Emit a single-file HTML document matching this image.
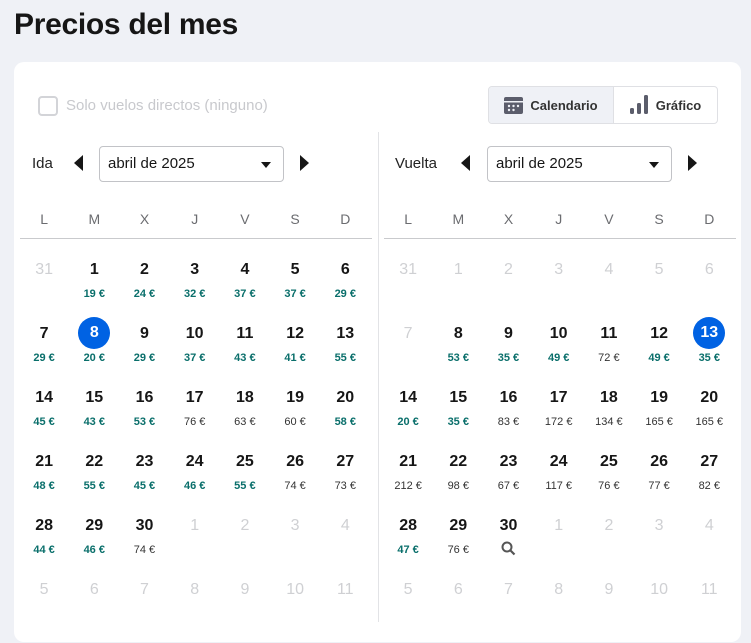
<!DOCTYPE html>
<html><head><meta charset="utf-8"><style>
*{box-sizing:border-box;margin:0;padding:0}
body{width:751px;height:622px;overflow:hidden;background:#eff1f6;font-family:"Liberation Sans",sans-serif;position:relative;color:#161616}
h1{position:absolute;left:14px;top:8px;font-size:30px;font-weight:700;letter-spacing:-0.3px;color:#161616}
.card{position:absolute;left:14px;top:62px;width:727px;height:580px;background:#fff;border-radius:10px}
.chk{position:absolute;left:38px;top:96px;width:20px;height:20px;border:2px solid #d3d4d8;border-radius:4px}
.chkl{position:absolute;left:66px;top:97px;font-size:15px;color:#c8c9cd}
.seg{position:absolute;left:488px;top:86px;width:230px;height:38px;border:1px solid #dfe0e4;border-radius:4px;display:flex;overflow:hidden}
.seg div{display:flex;align-items:center;justify-content:center;font-size:13px;font-weight:700;color:#333}
.s1{width:125px;background:#eff1f6;border-right:1px solid #dfe0e4;gap:7px}
.s2{flex:1;gap:8px}
.div{position:absolute;left:378px;top:132px;width:1px;height:490px;background:#e2e3e6}
.lbl{position:absolute;font-size:15px;color:#222}
.sel{position:absolute;top:146px;width:185px;height:36px;border:1px solid #c2c3c7;border-radius:4px;font-size:15px;padding:8px 0 0 8px;color:#161616}
.sel:after{content:"";position:absolute;right:12px;top:15px;border-left:5px solid transparent;border-right:5px solid transparent;border-top:6px solid #161616}
.arr{position:absolute;top:155px;width:0;height:0;border-top:8px solid transparent;border-bottom:8px solid transparent}
.al{border-right:9px solid #161616}.ar{border-left:9px solid #161616}
.wd{position:absolute;top:211px;width:50.2px;text-align:center;font-size:14px;color:#6b6c70}
.hl{position:absolute;top:238px;height:1px;background:#c9cacd}
.c{position:absolute;width:50.2px;height:64px;text-align:center}
.n{position:absolute;left:0;right:0;top:1px;font-size:16px;font-weight:700;line-height:20px;color:#161616}
.g .n{color:#cfd0d3;font-weight:400}
.p{position:absolute;left:0;right:0;top:29px;font-size:11px;line-height:12px;font-weight:700;color:#0a6f6b}
.p.x{font-weight:400;color:#333}
.s .n{left:9px;right:9px;top:-6px;height:32px;line-height:32px;border-radius:50%;background:#0062e3;color:#fff}
</style></head><body>
<h1>Precios del mes</h1>
<div class="card"></div>
<div class="chk"></div><div class="chkl">Solo vuelos directos (ninguno)</div>
<div class="seg"><div class="s1"><svg width="19" height="17" viewBox="0 0 19 17"><rect x="0" y="0" width="19" height="17" rx="2" fill="#5b5d6b"/><rect x="0" y="4" width="19" height="1.5" fill="#eff1f6"/><circle cx="5" cy="9" r="1.2" fill="#eff1f6"/><circle cx="9.5" cy="9" r="1.2" fill="#eff1f6"/><circle cx="14" cy="9" r="1.2" fill="#eff1f6"/><circle cx="5" cy="13" r="1.2" fill="#eff1f6"/><circle cx="9.5" cy="13" r="1.2" fill="#eff1f6"/></svg>Calendario</div><div class="s2"><svg width="18" height="20" viewBox="0 0 18 20"><rect x="0" y="13" width="4" height="6" rx="1.5" fill="#5b5d6b"/><rect x="7" y="8" width="4" height="11" rx="1.5" fill="#5b5d6b"/><rect x="14" y="0" width="4" height="19" rx="1.5" fill="#5b5d6b"/></svg>Gráfico</div></div>
<div class="div"></div>
<div class="lbl" style="left:32px;top:155px">Ida</div>
<div class="arr al" style="left:74px"></div>
<div class="sel" style="left:99px">abril de 2025</div>
<div class="arr ar" style="left:300px"></div>
<div class="lbl" style="left:395px;top:155px">Vuelta</div>
<div class="arr al" style="left:461px"></div>
<div class="sel" style="left:487px">abril de 2025</div>
<div class="arr ar" style="left:688px"></div>
<div class="hl" style="left:20px;width:352px"></div>
<div class="hl" style="left:384px;width:352px"></div>
<div id="cal"></div>
<script>
var wd=["L","M","X","J","V","S","D"];
function cal(x0,data){var h="";for(var i=0;i<7;i++)h+='<div class="wd" style="left:'+(x0+i*50.2)+'px">'+wd[i]+'</div>';
data.forEach(function(r,ri){r.forEach(function(c,ci){var cls="c",p="";var t=c.split(":");var n=t[0],v=t[1]||"";
if(v==="g")cls+=" g";else if(v)p= v==="q"?'<div class="p" style="top:26px"><svg width="15" height="15" viewBox="0 0 15 15"><circle cx="6" cy="6" r="4.5" fill="none" stroke="#555" stroke-width="2"/><path d="M9.5 9.5L13.5 13.5" stroke="#555" stroke-width="2.2"/></svg></div>':(v[0]==="n"?'<div class="p x">'+v.slice(1)+' €</div>':'<div class="p">'+v+' €</div>');
if(t[2])cls+=" s";
h+='<div class="'+cls+'" style="left:'+(x0+ci*50.2)+'px;top:'+(259+ri*64)+'px"><div class="n">'+n+'</div>'+p+'</div>';});});return h;}
var L=[["31:g","1:19","2:24","3:32","4:37","5:37","6:29"],["7:29","8:20:s","9:29","10:37","11:43","12:41","13:55"],["14:45","15:43","16:53","17:n76","18:n63","19:n60","20:58"],["21:48","22:55","23:45","24:46","25:55","26:n74","27:n73"],["28:44","29:46","30:n74","1:g","2:g","3:g","4:g"],["5:g","6:g","7:g","8:g","9:g","10:g","11:g"]];
var R=[["31:g","1:g","2:g","3:g","4:g","5:g","6:g"],["7:g","8:53","9:35","10:49","11:n72","12:49","13:35:s"],["14:20","15:35","16:n83","17:n172","18:n134","19:n165","20:n165"],["21:n212","22:n98","23:n67","24:n117","25:n76","26:n77","27:n82"],["28:47","29:n76","30:q","1:g","2:g","3:g","4:g"],["5:g","6:g","7:g","8:g","9:g","10:g","11:g"]];
document.getElementById("cal").innerHTML=cal(19,L)+cal(383,R);
</script>
</body></html>
